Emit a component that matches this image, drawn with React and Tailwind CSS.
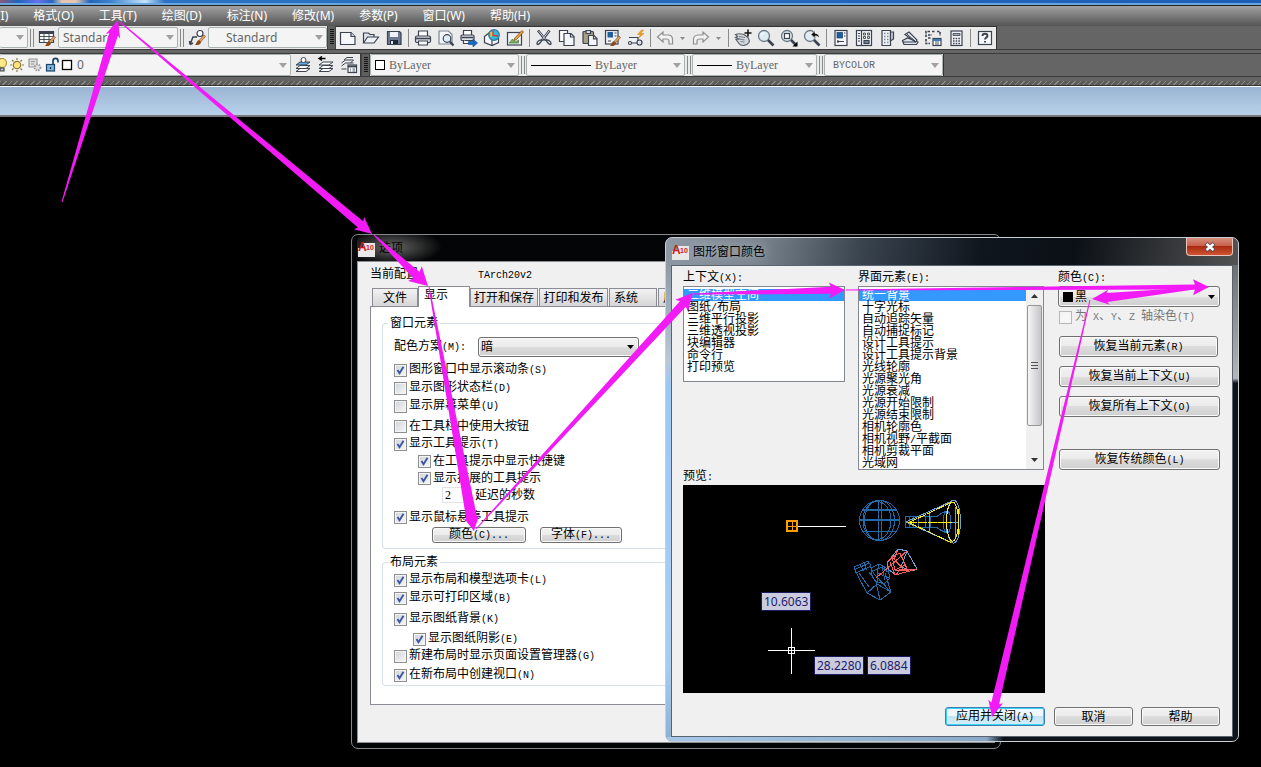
import React from 'react'
import { clsx } from 'clsx'

const SONG = "font-['Liberation_Serif','Noto_Sans_CJK_SC',serif] text-[12px] leading-[16px]"
const UI = "font-['Noto_Sans','Noto_Sans_CJK_SC',sans-serif]"
const HALF = "font-['Liberation_Mono',monospace] text-[10px]"
const INK = '#3b4250'

/* Sets the half-width runs of a mixed label in a 6px monospace. */
function Song({ text }) {
  return (
    <span className="whitespace-pre">
      {text.split(/([\x20-\x7e]+)/).map((run, i) => (i % 2 ? <span key={i} className={HALF}>{run}</span> : run))}
    </span>
  )
}

/* ---------- toolbar drawings ---------- */

function Icon({ children, label }) {
  return (
    <button type="button" aria-label={label} className="flex h-full w-[23px] shrink-0 items-center justify-center">
      <svg width="18" height="18" viewBox="0 0 18 18" fill="none" stroke={INK} strokeWidth="1.2">
        {children}
      </svg>
    </button>
  )
}

const Brush = ({ x = 0, y = 0 }) => (
  <g transform={`translate(${x} ${y})`} stroke="none">
    <path d="M9 0l1.6 1.4L5.600 7 4 5.400z" fill="#e8a35c" stroke="#6b4423" strokeWidth=".6" />
    <path d="M4 5l2 2c0 2.400-2.600 3.400-6 3 1.500-1 1.300-4 4-5z" fill="#8a4a1c" />
  </g>
)

const NewFile = () => (
  <Icon label="新建"><path d="M1.500 3.500h10.500l4 4v8h-14.500z" fill="#f4f6fa" /><path d="M12 3.500v4h4" fill="#cfd5df" /></Icon>
)
const OpenFile = () => (
  <Icon label="打开"><path d="M1.500 14V4h5l1.500 1.500h4V8" fill="#dfe3ea" /><path d="M1.500 14L5.500 8h11l-4.500 6z" fill="#eef1f5" /></Icon>
)
const Save = () => (
  <Icon label="保存"><path d="M2.500 2.500h12l1.500 1.500v11.500H2.500z" fill="#6b7a92" /><path d="M5 3h8v5H5z" fill="#eef2f7" stroke="none" /><path d="M5 11h8v4H5z" fill="#1f2937" stroke="none" /><path d="M6 12h2v3H6z" fill="#dde3ec" stroke="none" /></Icon>
)
const Printer = () => (
  <Icon label="打印"><path d="M4.500 7V2h9v5" fill="#fff" /><rect x="1.500" y="7" width="15" height="6.500" rx="1.500" fill="#dde1e8" /><path d="M2 9.500h14" strokeWidth="1.600" /><path d="M4.500 12h9v4h-9z" fill="#fff" /></Icon>
)
const Preview = () => (
  <Icon label="打印预览"><path d="M2 2h9.500L15 5.500V15H2z" fill="#f2f4f8" stroke="#7c8594" /><circle cx="10" cy="9.500" r="3.800" fill="#dfeef4" /><path d="M12.800 12.500l3.700 4" strokeWidth="2.200" /></Icon>
)
const Publish = () => (
  <Icon label="发布"><path d="M3.500 6V1.500h8V6" fill="#fff" /><rect x="1" y="6" width="13" height="5.500" rx="1.300" fill="#dde1e8" /><path d="M1.500 8.500h12" strokeWidth="1.500" /><path d="M3.500 11v3.500H9" fill="#fff" /><path d="M8.500 12.500H13V10l4.500 4-4.500 4v-2.500H8.500z" fill="#1668c4" stroke="#0b4a92" strokeWidth=".6" /></Icon>
)
const Globe3d = () => (
  <Icon label="三维DWF"><path d="M1.500 7.500L6 4l9.500 4v5.500l-6.500 3-7.500-3z" fill="#f5f7fa" /><path d="M9 10.500v6" /><circle cx="11" cy="6" r="5.300" fill="#39b5de" stroke="#2a7c9c" /><path d="M7 3.500c2-1.500 4-.5 3.500 1.500S8 7.500 7.500 8.500z" fill="#e8c13b" stroke="none" /><path d="M10 1.500v5l5 .5" stroke="#d6382c" strokeWidth="1.300" /></Icon>
)
const Markup = () => (
  <Icon label="标记"><rect x="1.500" y="3.500" width="14" height="12.500" fill="#eef1f5" /><path d="M3 14l3.500-4 3 3 3-2v3z" fill="#7cb05c" stroke="#4c7a3a" strokeWidth=".7" /><path d="M16 1.500l1.500 1.500-7 7.500-2.500 1 .8-2.500z" fill="#f6a83c" stroke="#7a4d1c" strokeWidth=".8" /></Icon>
)
const Cut = () => (
  <Icon label="剪切"><path d="M3 1.500l8 10M14.500 1.500L7 11.500" strokeWidth="2.600" /><path d="M3.500 2l7.500 9M14 2L7 11" stroke="#f2f4f7" strokeWidth=".8" /><path d="M11 11c2-.5 5 1.500 5 3.500s-3 1-5-3.500zM7 11c-2-.5-5 1.500-5 3.500s3 1 5-3.500z" fill="#e8ebf0" strokeWidth="1.300" /></Icon>
)
const Copy = () => (
  <Icon label="复制"><path d="M1.500 1.500h8v11h-8z" fill="#fff" /><path d="M6 4.500h7l3 3v9H6z" fill="#f3f5f8" /><path d="M12.500 4.500V8H16" /></Icon>
)
const Paste = () => (
  <Icon label="粘贴"><rect x="2" y="2.500" width="10.500" height="12" rx="1" fill="#a99f88" /><path d="M5 1.500h4.500v3H5z" fill="#ddd" /><path d="M7.500 6.500h5.500l3 3v7H7.500z" fill="#f3f5f8" /><path d="M12.500 6.500v3.300H16" /></Icon>
)
const Match = () => (
  <Icon label="特性匹配"><rect x="1.500" y="1.500" width="12.500" height="13.500" fill="#eef1f6" /><rect x="3.500" y="3" width="5.500" height="5.500" fill="#1d5f9e" stroke="none" /><path d="M10.500 4h2M10.500 7h2M4 12h3" /><Brush x={6} y={7} /></Icon>
)
const Block = () => (
  <Icon label="块编辑器"><path d="M2 8.500h9V14H3.500" fill="#eef1f5" /><circle cx="3" cy="14" r="1.500" fill="#fff" /><circle cx="12.500" cy="13.500" r="2.500" fill="#dfe3ea" /><path d="M14.500 1l-4 4.500h3L11.500 9 17 4.500h-3.200L16.500 1z" fill="#f5a623" stroke="#c97a10" strokeWidth=".5" /></Icon>
)
const Undo = () => (
  <Icon label="放弃"><path d="M1.500 8L7 3v3h5c3 0 4.500 2 4.500 4.500V15H13v-3c0-1.500-1-2-2.500-2H7v3z" fill="#f3f3f3" stroke="#8f8f8f" /></Icon>
)
const Redo = () => (
  <Icon label="重做"><path d="M16.500 8L11 3v3H6c-3 0-4.500 2-4.500 4.500V15H5v-3c0-1.500 1-2 2.500-2H11v3z" fill="#f3f3f3" stroke="#8f8f8f" /></Icon>
)
const Pan = () => (
  <Icon label="实时平移"><path d="M1.500 5.500c2-1 5-1 8.500 0l4 3c1 2 2 3 1 5-2 3.500-8 4-10 1L2 10.500l3-.5-3.500-1.500 2-1z" fill="#d3d7dd" stroke="#5b626d" /><path d="M5 7.500l6 1M5.500 10l5 1M6.500 12.500l4 .5" stroke="#7d848e" /><path d="M14 .5v7M10.500 4h7" stroke="#111" strokeWidth="1.500" /></Icon>
)
const Lens = () => (<><circle cx="7" cy="7" r="5.500" fill="#dcecf0" stroke="#6d7680" strokeWidth="1.300" /><path d="M11 11l5.500 5.500" strokeWidth="2.600" /></>)
const Zoom = () => <Icon label="实时缩放"><Lens /><path d="M4 6.500C4.500 4.500 6 4 7.500 4" stroke="#fff" /></Icon>
const ZoomWin = () => <Icon label="窗口缩放"><Lens /><rect x="4.500" y="4.500" width="5" height="5" fill="#fff" /><path d="M17.500 12.500v5h-5z" fill="#000" stroke="none" /></Icon>
const ZoomPrev = () => <Icon label="缩放上一个"><Lens /><path d="M8 5.500l4-4v2.700c3 .3 4.500 2 4.500 5-1-1.500-2-2.200-4.500-2.200v2.500z" fill="#111" stroke="#fff" strokeWidth=".7" /></Icon>
const Props = () => (
  <Icon label="特性"><rect x="3" y="1.500" width="12" height="15" fill="#f5f7fa" /><rect x="5" y="3.500" width="5.500" height="5.500" fill="#1d5f9e" stroke="#123f6b" strokeWidth=".7" /><path d="M12 4h1.500M12 7h1.500M5 12.500h7M6 11v3" /></Icon>
)
const Center = () => (
  <Icon label="设计中心"><rect x="1.500" y="1.500" width="15" height="15" fill="#f5f7fa" /><path d="M6.500 2v14M3 4.500h2M3 7h2M3 9.500h2M3 12h2" /><path d="M8.500 4h2v2h-2zM12.500 4h2v2h-2zM8.500 7.500h2v2h-2zM12.500 7.500h2v2h-2z" strokeWidth=".9" /><rect x="9" y="11.500" width="5" height="3" fill="#7b8798" /></Icon>
)
const Palette = () => (
  <Icon label="工具选项板"><path d="M4 1.500h8.500v15H4z" fill="#f0f2f6" /><path d="M12.500 3h3v7l-3 2z" fill="#c2c8d2" /><path d="M6 4.500h1.500M9 4.500h1.500M6 7.500h1.500M9 7.500h1.500M6 10.500h1.500M9 10.500h1.500M6 13.500h1.500M9 13.500h1.500" strokeWidth="1.700" stroke="#7b8798" /></Icon>
)
const Sheets = () => (
  <Icon label="图纸集"><path d="M1.500 11.500l5-2.500 10.500 4-1.500 2.500H3z" fill="#dfe3ea" /><path d="M4 5.500l4-2.500 8 8-1.500 2z" fill="#eef1f5" /><path d="M6 5l8 7M1.500 13h13" strokeWidth="1" /></Icon>
)
const MarkupSet = () => (
  <Icon label="标记集"><path d="M2 8V2.500h4M8 2.500h3M13 2.500h3V7M2 10v4.500h4M4 6h4M4 9h3" strokeDasharray="2.500 1" strokeWidth="1.600" /><rect x="9" y="9.500" width="8" height="7" fill="#fff" /><path d="M9 11h8" stroke="#2a6db0" strokeWidth="1.800" /><path d="M11 13h4M11 15h4" strokeWidth=".9" /></Icon>
)
const Calc = () => (
  <Icon label="快速计算器"><rect x="4" y="2" width="11" height="14.500" fill="#f0f2f6" /><path d="M6 4.500h7v2H6z" fill="#9eb0c2" strokeWidth=".8" /><path d="M6 9.500h7M6 12h7M6 14.500h7" strokeWidth="1.500" strokeDasharray="1.500 1.200" /></Icon>
)
const Help = () => (
  <Icon label="帮助"><rect x="2.500" y="2.500" width="13" height="13" fill="#f5f7fa" /><path d="M6.500 7c0-3 5-3 5 0 0 1.700-2.500 1.500-2.500 3.500M9 12v1.600" strokeWidth="1.900" /></Icon>
)

const Divider = () => (
  <span className="flex h-full w-[6px] shrink-0 items-center justify-center"><span className="h-[18px] w-px bg-[#8a8a8a]" /></span>
)
const Double = () => (
  <span className="flex h-full w-[7px] shrink-0 items-center justify-center gap-[2px]"><span className="h-[18px] w-px bg-[#8a8a8a]" /><span className="h-[18px] w-px bg-[#8a8a8a]" /></span>
)
const Grip = () => (
  <span className="h-full w-[9px] shrink-0 border-x border-[#444] bg-[#5f5f5f] py-[3px] pl-[2px]">
    <span className="block h-[15px] w-[4px] bg-[repeating-linear-gradient(0deg,#111_0_1px,#5f5f5f_1px_2px)]" />
  </span>
)
const Caret = ({ className }) => (
  <svg className={className} width="8" height="5" viewBox="0 0 8 5"><path d="M0 0h8L4 5z" fill="currentColor" /></svg>
)
const MiniArrow = () => (
  <button type="button" aria-label="历史" className="flex h-full w-[13px] shrink-0 items-center justify-center text-[#8a8a8a]">
    <svg width="5" height="3" viewBox="0 0 5 3"><path d="M0 0h5L2.500 3z" fill="currentColor" /></svg>
  </button>
)

/* A flat toolbar combo: optional drawing at the left, then a native select. */
function Combo({ label, value, className, textClass, children }) {
  return (
    <label className={clsx('relative flex h-full shrink-0 items-center rounded-[2px] border border-[#a9b1b1] bg-[#f4f4f4]', className)}>
      {children}
      <select aria-label={label} className={clsx('h-full min-w-0 flex-1 appearance-none bg-transparent text-[#666] outline-none', textClass)}>
        <option>{value}</option>
      </select>
      <Caret className="pointer-events-none absolute right-[3px] text-[#a0a0a0]" />
    </label>
  )
}

const MENUS = ['插入(I)', '格式(O)', '工具(T)', '绘图(D)', '标注(N)', '修改(M)', '参数(P)', '窗口(W)', '帮助(H)']

function MenuBar() {
  return (
    <nav className={clsx('h-5 overflow-hidden bg-gradient-to-b from-[#a2a2a2] to-[#555]', UI)}>
      <ul className="-ml-[27px] flex h-full gap-[25px]">
        {MENUS.map((m) => (
          <li key={m} className="flex"><button type="button" className="whitespace-nowrap text-[12px] leading-[18px] text-white">{m}</button></li>
        ))}
      </ul>
    </nav>
  )
}

const LayerStack = ({ children, blue }) => (
  <g strokeWidth="1">
    <path d="M2 15.500l4-3h10l-4 3zM2 12.500l4-3h10l-4 3z" fill="#fff" />
    <path d="M2 9l4-3h10l-4 3z" fill={blue ? '#62aee2' : '#fff'} />
    {children}
  </g>
)

function Toolbars() {
  return (
    <div className="bg-[#656565]">
      <div className="flex h-6 border-b border-[#3a3a3a]">
        <div className="flex h-full bg-[#ebebeb] py-px">
          <Combo label="标注样式" value="" className="w-[28px] border-l-0" />
          <Double />
          <Icon label="表格样式">
            <path d="M1.500 2.500h14v11h-14z" fill="#fff" /><path d="M1.500 4h14" strokeWidth="2" /><path d="M1.500 7.500h14M1.500 10.500h14M6 4v9.500M11 4v9.500" strokeWidth=".9" /><Brush x={7} y={7} />
          </Icon>
          <Combo label="表格样式" value="Standard" className={clsx('w-[120px]', UI)} textClass="pl-1 text-[12px]" />
          <Double />
          <Icon label="多重引线样式">
            <path d="M2 15.500L5 8h4M2 15.500l-.5-3.500M2 15.500l3-1.500" strokeWidth="1.500" /><circle cx="12" cy="4.500" r="3" fill="#fff" /><Brush x={7} y={6} />
          </Icon>
          <Combo label="多重引线样式" value="Standard" className={clsx('w-[119px]', UI)} textClass="pl-[17px] text-[12px]" />
        </div>
        <Grip />
        <div className="flex h-full border-t border-r border-[#333] bg-[#ebebeb]">
          <NewFile /><OpenFile /><Save /><Divider />
          <Printer /><Preview /><Publish /><Globe3d /><Markup /><Divider />
          <Cut /><Copy /><Paste /><Match /><Block /><Divider />
          <Undo /><MiniArrow /><Redo /><MiniArrow /><Divider />
          <Pan /><Zoom /><ZoomWin /><ZoomPrev /><Divider />
          <Props /><Center /><Palette /><Sheets /><MarkupSet /><Calc /><Divider />
          <Help />
        </div>
      </div>
      <div className="mt-[3px] flex h-6 border-y border-[#3a3a3a]">
        <div className="flex h-full border-r border-[#3a3a3a] bg-[#ebebeb]">
          <Combo label="图层" value="0" className={clsx('w-[291px] border-l-0', UI)} textClass="pl-1 text-[12px]">
            <svg width="73" height="20" viewBox="0 0 73 20" fill="none" stroke={INK} strokeWidth="1.200" className="shrink-0">
              <circle cx="2" cy="8" r="4.500" fill="#fbe98a" stroke="#b38f2a" /><path d="M0 13h4v3H0z" fill="#bbb" />
              <g stroke="#8a7a3a"><circle cx="17" cy="10" r="3.700" fill="#fbe27a" /><path d="M17 3v2M17 15v2M10 10h2M22 10h2M12 5l1.500 1.500M20.500 13.500L22 15M22 5l-1.500 1.500M12 15l1.500-1.500" /></g>
              <g stroke="#9a9a9a"><path d="M29 4h8v8h-8z" fill="#ddd" /><path d="M31 6.500h4M31 9h3" /><circle cx="37.500" cy="12.500" r="3" fill="#ddd" strokeWidth="1.800" strokeDasharray="1.500 1" /></g>
              <rect x="46.500" y="9.500" width="8" height="6.500" fill="#79b6e0" stroke="#1d4466" /><path d="M53 9V6c0-3.500 5-3.500 5 0v1.500" stroke="#1d4466" strokeWidth="1.700" /><path d="M50.500 12v2" stroke="#123" />
              <rect x="62.500" y="5.500" width="9" height="9" fill="#fff" stroke="#000" strokeWidth="1.300" />
            </svg>
          </Combo>
          <Icon label="置为当前"><LayerStack blue><circle cx="9.500" cy="4" r="2.500" fill="#fff" /></LayerStack></Icon>
          <Icon label="上一个图层"><LayerStack><path d="M8.500 2.500h-6M5 .5l-3 2 3 2" stroke="#000" strokeWidth="1.400" /></LayerStack></Icon>
          <Icon label="图层状态"><path d="M1.500 10l4-3h8M1.500 7l4-3h8l-3 3M1.500 13h5M4 4l3-2.500h6" strokeWidth="1" /><rect x="8" y="9" width="8.500" height="7.500" fill="#fff" /><path d="M8 10.500h8.500" strokeWidth="1.800" /><path d="M10 13h1M12.500 13H15M10 15h1M12.500 15H15" strokeWidth=".9" /></Icon>
        </div>
        <Grip />
        <div className="flex h-full border-r border-[#333] bg-[#ebebeb] font-['Liberation_Serif',serif]">
          <Combo label="颜色控制" value="ByLayer" className="w-[149px]" textClass="pl-1 text-[12px]">
            <span className="ml-1 h-[10px] w-[10px] border border-black bg-white" />
          </Combo>
          <Double />
          <Combo label="线型控制" value="ByLayer" className="w-[159px]" textClass="pl-1 text-[12px]">
            <span className="ml-1 h-px w-[60px] bg-black" />
          </Combo>
          <Double />
          <Combo label="线宽控制" value="ByLayer" className="w-[125px]" textClass="pl-1 text-[12px]">
            <span className="ml-1 h-px w-[35px] bg-black" />
          </Combo>
          <Double />
          <Combo label="打印样式控制" value="BYCOLOR" className="w-[119px]" textClass="pl-2 font-['Liberation_Mono',monospace] text-[10px]" />
        </div>
      </div>
      <div className="h-[9px] border-b border-[#333] pt-[4px]">
        <div className="h-[4px] bg-[repeating-linear-gradient(135deg,#8a8a8a_0_1px,#5c5c5c_1px_4px)]" />
      </div>
    </div>
  )
}

/* ---------- dialog parts ---------- */

const AppIcon = () => (
  <svg width="17" height="17" viewBox="0 0 17 17" className="shrink-0">
    <path d="M0 8h5V3h12v14H0z" fill="#e9e9e9" />
    <text x="0" y="11" fontFamily="Liberation Sans" fontSize="12" fontWeight="700" fill="#d0191c">A</text>
    <text x="8" y="10" fontFamily="Liberation Sans" fontSize="7" fontWeight="700" fill="#d0191c">10</text>
  </svg>
)

function Check({ label, checked = false, disabled = false, className, gap = 'gap-[2px]' }) {
  return (
    <label className={clsx('flex items-center whitespace-nowrap', gap, disabled ? 'text-[#777]' : 'text-black', className)}>
      <span className="relative flex h-[13px] w-[13px] shrink-0">
        <input
          type="checkbox"
          defaultChecked={checked}
          disabled={disabled}
          className="peer h-[13px] w-[13px] appearance-none border border-[#8e8f8f] bg-gradient-to-br from-[#cfd3d8] to-[#f8f8f8] shadow-[inset_0_0_0_1px_#f4f4f4] disabled:border-[#b8b8b8] disabled:from-[#f6f6f6]"
        />
        <svg className="pointer-events-none absolute inset-0 hidden peer-checked:block" width="13" height="13" viewBox="0 0 13 13">
          <path d="M3.500 6l2 3.200 4-6.500" fill="none" stroke="#3c57a3" strokeWidth="1.900" />
        </svg>
      </span>
      <Song text={label} />
    </label>
  )
}

function Btn({ text, primary, className }) {
  return (
    <button
      type="button"
      className={clsx(
        'flex items-center justify-center whitespace-nowrap rounded-[3px] border',
        primary
          ? 'border-[#3c7fb1] bg-[linear-gradient(#eef8fe_50%,#c3e4f6_50%,#d5eefa)] shadow-[inset_0_0_0_1px_#3ad2f5]'
          : 'border-[#707070] bg-[linear-gradient(#f2f2f2_0%,#ebebeb_50%,#dddddd_50%,#cfcfcf_100%)] shadow-[inset_0_0_0_1px_#fafafa]',
        className,
      )}
    >
      <Song text={text} />
    </button>
  )
}

function Drop({ id, value, className, selectClass, children }) {
  return (
    <span className={clsx('relative flex items-center rounded-[3px] border border-[#707070] bg-[linear-gradient(#f2f2f2_0%,#ebebeb_50%,#dddddd_50%,#cfcfcf_100%)] shadow-[inset_0_0_0_1px_#fafafa]', className)}>
      {children}
      <select id={id} className={clsx('h-full min-w-0 flex-1 appearance-none bg-transparent outline-none', selectClass)}>
        <option>{value}</option>
      </select>
      <svg className="pointer-events-none absolute right-[4px]" width="7" height="4" viewBox="0 0 7 4"><path d="M0 0h7L3.500 4z" /></svg>
    </span>
  )
}

function ListRows({ items, label }) {
  return (
    <ul role="listbox" aria-label={label} className="min-w-0 flex-1 pt-[2px]">
      {items.map((t, i) => (
        <li key={t} role="option" aria-selected={i === 0} className={clsx('h-3 whitespace-nowrap pl-[3px] leading-[12px]', i === 0 && 'bg-[#3399ff] text-white')}>
          <Song text={t} />
        </li>
      ))}
    </ul>
  )
}

const CONTEXTS = ['二维模型空间', '图纸/布局', '三维平行投影', '三维透视投影', '块编辑器', '命令行', '打印预览']
const ELEMENTS = ['统一背景', '十字光标', '自动追踪矢量', '自动捕捉标记', '设计工具提示', '设计工具提示背景', '光线轮廓', '光源聚光角', '光源衰减', '光源开始限制', '光源结束限制', '相机轮廓色', '相机视野/平截面', '相机剪裁平面', '光域网']

const TAB = 'flex h-[18px] items-center border border-b-0 border-[#8c8c96] bg-gradient-to-b from-[#f2f2f2] to-[#d6d6d6] whitespace-nowrap overflow-hidden'

function OptionsDialog() {
  return (
    <section aria-label="选项" className={clsx('absolute left-[351px] top-[234px] w-[650px] rounded-[7px] border border-[#85888c] bg-[#040506] px-[5px] pb-[5px]', SONG)}>
      <header className="flex h-[26px] items-center gap-[4px] rounded-t-[6px] bg-[radial-gradient(ellipse_50px_18px_at_35px_12px,#666,transparent)] pl-[1px]">
        <AppIcon />
        <h2 className={clsx('text-[12px] text-black', UI)}>选项</h2>
      </header>
      <div className="border border-[#8d8f92] bg-[#f0f0f0] px-[12px] pb-[37px] pt-[4px]">
        <div className="flex h-[18px] items-center">
          <span className="w-[108px]"><Song text="当前配置:" /></span>
          <Song text="TArch20v2" />
        </div>
        <div role="tablist" className="mt-[2px] flex h-5 items-end gap-px pl-[2px]">
          <button role="tab" type="button" className={clsx(TAB, 'w-[46px] justify-center')}>文件</button>
          <button role="tab" type="button" aria-selected="true" className="relative -mx-px -mb-px flex h-[21px] w-[52px] items-start border border-b-0 border-[#8c8c96] bg-white pl-[5px]">显示</button>
          <button role="tab" type="button" className={clsx(TAB, 'w-[68px] justify-center')}>打开和保存</button>
          <button role="tab" type="button" className={clsx(TAB, 'w-[69px] justify-center')}>打印和发布</button>
          <button role="tab" type="button" className={clsx(TAB, 'w-[48px] pl-[4px]')}>系统</button>
          <button role="tab" type="button" className={clsx(TAB, 'w-[80px] pl-[4px]')}>用户系统配置</button>
        </div>
        <div role="tabpanel" className="border border-[#8c8c96] bg-white px-[11px] pb-[18px] pt-[8px]">
          <fieldset className="rounded-[3px] border border-[#d5dfe5] pb-[5px] pl-[11px]">
            <legend className="-ml-[6px] px-[2px]">窗口元素</legend>
            <div className="mt-[6px] flex h-5 items-center">
              <label htmlFor="scheme" className="w-[84px]"><Song text="配色方案(M):" /></label>
              <Drop id="scheme" value="暗" className="h-5 w-[161px]" selectClass="pl-[2px]" />
            </div>
            <Check checked className="mt-[4px] h-[18px]" label="图形窗口中显示滚动条(S)" />
            <Check className="h-[18px]" label="显示图形状态栏(D)" />
            <Check className="h-[18px]" label="显示屏幕菜单(U)" />
            <Check className="mt-[2px] h-[18px]" label="在工具栏中使用大按钮" />
            <Check checked className="h-[18px]" label="显示工具提示(T)" />
            <Check checked className="h-[16px] pl-[24px]" label="在工具提示中显示快捷键" />
            <Check checked className="h-[18px] pl-[24px]" label="显示扩展的工具提示" />
            <label className="flex h-[16px] items-center gap-[3px] pl-[48px]">
              <input defaultValue="2" className="h-[16px] w-[30px] border border-[#dfe3e8] bg-white pl-[2px] text-[12px]" />
              延迟的秒数
            </label>
            <Check checked className="mt-[5px] h-[18px]" label="显示鼠标悬停工具提示" />
            <div className="mt-px flex gap-[14px] pl-[38px]">
              <Btn className="h-4 w-[94px]" text="颜色(C)..." />
              <Btn className="h-4 w-[82px]" text="字体(F)..." />
            </div>
          </fieldset>
          <fieldset className="mt-[5px] rounded-[3px] border border-[#d5dfe5] pb-px pl-[11px]">
            <legend className="-ml-[6px] px-[2px]">布局元素</legend>
            <Check checked className="mt-px h-[18px]" label="显示布局和模型选项卡(L)" />
            <Check checked className="h-[18px]" label="显示可打印区域(B)" />
            <Check checked className="mt-[3px] h-[18px]" label="显示图纸背景(K)" />
            <Check checked className="mt-[2px] h-[18px] pl-[19px]" label="显示图纸阴影(E)" />
            <Check className="h-[16px]" label="新建布局时显示页面设置管理器(G)" />
            <Check checked className="mt-[2px] h-[18px]" label="在新布局中创建视口(N)" />
          </fieldset>
        </div>
      </div>
    </section>
  )
}

function PreviewScene() {
  return (
    <svg className="absolute inset-0" width="362" height="208" viewBox="0 0 362 208" fill="none" shapeRendering="crispEdges">
      <path d="M109.500 41.500h53" stroke="#fff" />
      <rect x="104" y="36" width="10" height="10" stroke="#ff9c00" strokeWidth="2" />
      <path d="M109.500 37v9M105 41.500h8" stroke="#ff9c00" />
      <path d="M85 165.500h47M108.500 143v46" stroke="#fff" />
      <rect x="105.500" y="162.500" width="6" height="6" stroke="#fff" />
      <g stroke="#236ba8">
        <circle cx="196.500" cy="35.500" r="20" />
        <ellipse cx="196.500" cy="35.500" rx="15" ry="20" />
        <ellipse cx="194" cy="35.500" rx="14" ry="19" />
        <path d="M195.500 15v41M198.500 15v41M180 46.500h33" />
        <path d="M179 25h35M176 35h41" strokeWidth="2" />
        <path d="M222.500 31v12M222.500 31.500h32M222.500 42.500h32M226.500 31v12M230.500 31v12M235.500 31v12M242.500 32v11M247.500 32v11M254 31l9-5M254 43l9 5" />
        <ellipse cx="264" cy="37" rx="4" ry="11" />
      </g>
      <g stroke="#6f9fd4">
        <ellipse cx="270.500" cy="36.500" rx="7" ry="21.500" />
        <path d="M223 37l46-21M223 37l46 21M246.500 27v20M263.500 26v22M250 37.500h25M272.500 22v30" />
      </g>
      <g stroke="#ffee10">
        <ellipse cx="269.500" cy="36.500" rx="6" ry="19.500" />
        <path d="M225 37.500h44M226 37.500l42-20M226 37.500l42 20" strokeDasharray="9 1" />
        <path d="M275.500 24v26" />
      </g>
      <g stroke="#236ba8">
        <path d="M171 82l14-6 3 5-15 7zM173 84l13-6M171 82l3 7 10 19 13 7 11-8-6-19M187 81l4 8 17 18M176 88l10 14M184 108l10-9 14 8M197 115l-4-18-7-10M177 80l4 6M181 78l3 7M188 83l8-4 9 5 2 9-6 6-9-3-4-8zM196 79l-2 9 1 10M190 86l9-4 3 13M199 82l7 6M194 88l12 5" />
      </g>
      <path d="M215 64l9 2 10 18-4 2M224 66l-6 16 12 4M204 78l11-14M204 78l2 7 7 5" stroke="#6f9fd4" />
      <path d="M193 93l31-27M204 77l7-6M209 72l8-4 5 12-10 5zM207 77l5 13 22-6M213 90l4-6 16 0M217 68l8 18M212 85l14 0M209 72l13 14M215 64l-4 10" stroke="#f4605f" />
    </svg>
  )
}

const VALUE = clsx('absolute flex h-[19px] items-center border border-[#1a1a5e] bg-[#cbcbe0] px-[2px] text-[12px] leading-[16px] text-[#1c1c66]', UI)

function ColorsDialog() {
  return (
    <section aria-label="图形窗口颜色" className={clsx('absolute left-[665px] top-[237px] w-[574px] overflow-hidden rounded-[7px] border border-[#c9ced4] bg-[linear-gradient(100deg,#8e99a5_0,#7b858f_14%,#39434e_30%,#10161e_48%,#0b1016_62%,#555_88%,#77797b_100%)]', SONG)}>
      <header className="flex h-[27px] items-start pl-[6px]">
        <div className="flex h-full flex-1 items-center gap-[4px]">
          <AppIcon />
          <h2 className={clsx('text-[12px] text-black [text-shadow:0_0_8px_#c3cbd3]', UI)}>图形窗口颜色</h2>
        </div>
        <button type="button" aria-label="关闭" className="mr-[5px] flex h-[18px] w-[47px] items-center justify-center rounded-b-[4px] border border-t-0 border-[#e9c5bd] bg-[linear-gradient(#d8907f_0,#c8604b_45%,#a92a10_50%,#cf5432_100%)]">
          <svg width="12" height="10" viewBox="0 0 12 10" fill="none">
            <path d="M2 1.500l8 7M10 1.500l-8 7" stroke="#4a4f5e" strokeWidth="4" /><path d="M2.500 2l7 6M9.500 2l-7 6" stroke="#fff" strokeWidth="2.400" />
          </svg>
        </button>
      </header>
      <div className="flex">
        <span className="w-[5px] bg-[linear-gradient(#8f9aa6_0,#b7c8d8_20%,#9cc8f5_26%,#a9cdf0_85%,#8fb2d4_100%)]" />
        <div className="min-w-0 flex-1 border border-[#5a6470] bg-[#f0f0f0] pb-[10px] pl-[11px] pr-[12px] pt-[3px]">
          <div className="flex gap-[13px]">
            <div className="w-[362px]">
              <div className="flex gap-[13px]">
                <div className="w-[162px]">
                  <p className="h-[17px]"><Song text="上下文(X):" /></p>
                  <div className="flex h-[96px] overflow-hidden border border-[#828790] bg-white"><ListRows items={CONTEXTS} label="上下文(X)" /></div>
                </div>
                <div className="w-[186px]">
                  <p className="h-[17px]"><Song text="界面元素(E):" /></p>
                  <div className="flex h-[184px] overflow-hidden border border-[#828790] bg-white">
                    <ListRows items={ELEMENTS} label="界面元素(E)" />
                    <div className="flex w-[17px] flex-col items-center bg-[#f0f0f0]">
                      <svg className="my-[7px]" width="7" height="4" viewBox="0 0 7 4"><path d="M3.500 0L7 4H0z" fill="#333" /></svg>
                      <span className="flex h-[121px] w-[15px] flex-col items-center justify-center gap-[2px] rounded-[2px] border border-[#979797] bg-gradient-to-r from-[#f5f5f5] to-[#c6c6ca]">
                        <i className="h-px w-[7px] bg-[#555]" /><i className="h-px w-[7px] bg-[#555]" /><i className="h-px w-[7px] bg-[#555]" />
                      </span>
                      <svg className="mb-[7px] mt-auto" width="7" height="4" viewBox="0 0 7 4"><path d="M0 0h7L3.500 4z" fill="#333" /></svg>
                    </div>
                  </div>
                </div>
              </div>
              <p className="h-[15px] leading-[12px]"><Song text="预览:" /></p>
              <div className="relative h-[208px] bg-black">
                <PreviewScene />
                <output className={clsx(VALUE, 'left-[78px] top-[107px]')}>10.6063</output>
                <output className={clsx(VALUE, 'left-[131px] top-[171px]')}>28.2280</output>
                <output className={clsx(VALUE, 'left-[184px] top-[171px]')}>6.0884</output>
              </div>
            </div>
            <div className="flex min-w-0 flex-1 flex-col">
              <label htmlFor="color" className="h-[17px]"><Song text="颜色(C):" /></label>
              <Drop id="color" value="黑" className="h-[21px]" selectClass="pl-[2px]">
                <span className="ml-1 h-[10px] w-[10px] bg-black" />
              </Drop>
              <Check disabled gap="gap-[3px]" className="mt-px h-[18px] pl-px" label="为 X、Y、Z 轴染色(T)" />
              <Btn className="ml-px mr-[2px] mt-[10px] h-[21px]" text="恢复当前元素(R)" />
              <Btn className="ml-px mt-[9px] h-[21px]" text="恢复当前上下文(U)" />
              <Btn className="ml-px mt-[9px] h-[21px]" text="恢复所有上下文(O)" />
              <Btn className="ml-px mt-[32px] h-[21px]" text="恢复传统颜色(L)" />
            </div>
          </div>
          <footer className="mt-[14px] flex justify-end">
            <Btn primary className="h-[19px] w-[100px]" text="应用并关闭(A)" />
            <Btn className="ml-[9px] h-[19px] w-[79px]" text="取消" />
            <Btn className="ml-[8px] h-[19px] w-[79px]" text="帮助" />
          </footer>
        </div>
        <span className="w-[5px] bg-[linear-gradient(#6d6f71_0,#b5b6b8_24%,#0d1319_25%,#0d1319_100%)]" />
      </div>
      <div className="h-[4px] bg-[linear-gradient(90deg,#a5c8ea_0,#8aa9c8_56%,#0d1319_59%)]" />
    </section>
  )
}

/* ---------- guide arrows ---------- */

const ARROWS = [
  [62, 202, 118, 20, 9, 17, 15],
  [120, 22, 372, 234, 8, 17, 16],
  [373, 234, 428, 286, 9, 18, 20],
  [429, 287, 474, 531, 11, 15, 16],
  [476, 529, 693, 293, 8, 17, 17],
  [694, 294, 845, 290, 7, 16, 16],
  [846, 290, 1209, 287, 5, 16, 16],
  [1208, 287, 1092, 299, 9, 17, 15],
  [1090, 300, 992, 717, 8, 16, 15],
]

function arrowPoints([x1, y1, x2, y2, shaft, head, wing]) {
  const len = Math.hypot(x2 - x1, y2 - y1)
  const ux = (x2 - x1) / len
  const uy = (y2 - y1) / len
  const at = (d, s) => `${x1 + ux * d - uy * s},${y1 + uy * d + ux * s}`
  const neck = len - head
  return [at(0, -0.5), at(neck + 2, -shaft / 2), at(neck, -wing / 2), at(len, 0), at(neck, wing / 2), at(neck + 2, shaft / 2), at(0, 0.5)].join(' ')
}

function GuideArrows() {
  return (
    <svg className="pointer-events-none absolute left-0 top-0" width="1261" height="767" viewBox="0 0 1261 767" fill="#f31bf5" aria-hidden="true">
      {ARROWS.map((a) => <polygon key={a.join()} points={arrowPoints(a)} />)}
    </svg>
  )
}

export default function App() {
  return (
    <main className="relative min-h-screen overflow-hidden bg-black text-black">
      <div className="h-[3px] bg-[linear-gradient(90deg,#8a5a7a_0,#1c66bd_18px,#6a6ff0_38px,#2468bd_52px,#e5c7b0_62px,#e5c7b0_76px,#1f66b8_90px,#3f86d0_112px,#c8e4fa_145px,#2a72c4_165px,#1a5fb4_100%)]" />
      <div className="h-[3px] border-b border-[#222] bg-[#6aa5dd]" />
      <MenuBar />
      <Toolbars />
      <div className="h-[29px] border-t border-white bg-gradient-to-b from-[#9ab5d4] to-[#b9d1ea]" />
      <div className="h-[2px] bg-[#777]" />
      <OptionsDialog />
      <ColorsDialog />
      <GuideArrows />
    </main>
  )
}
